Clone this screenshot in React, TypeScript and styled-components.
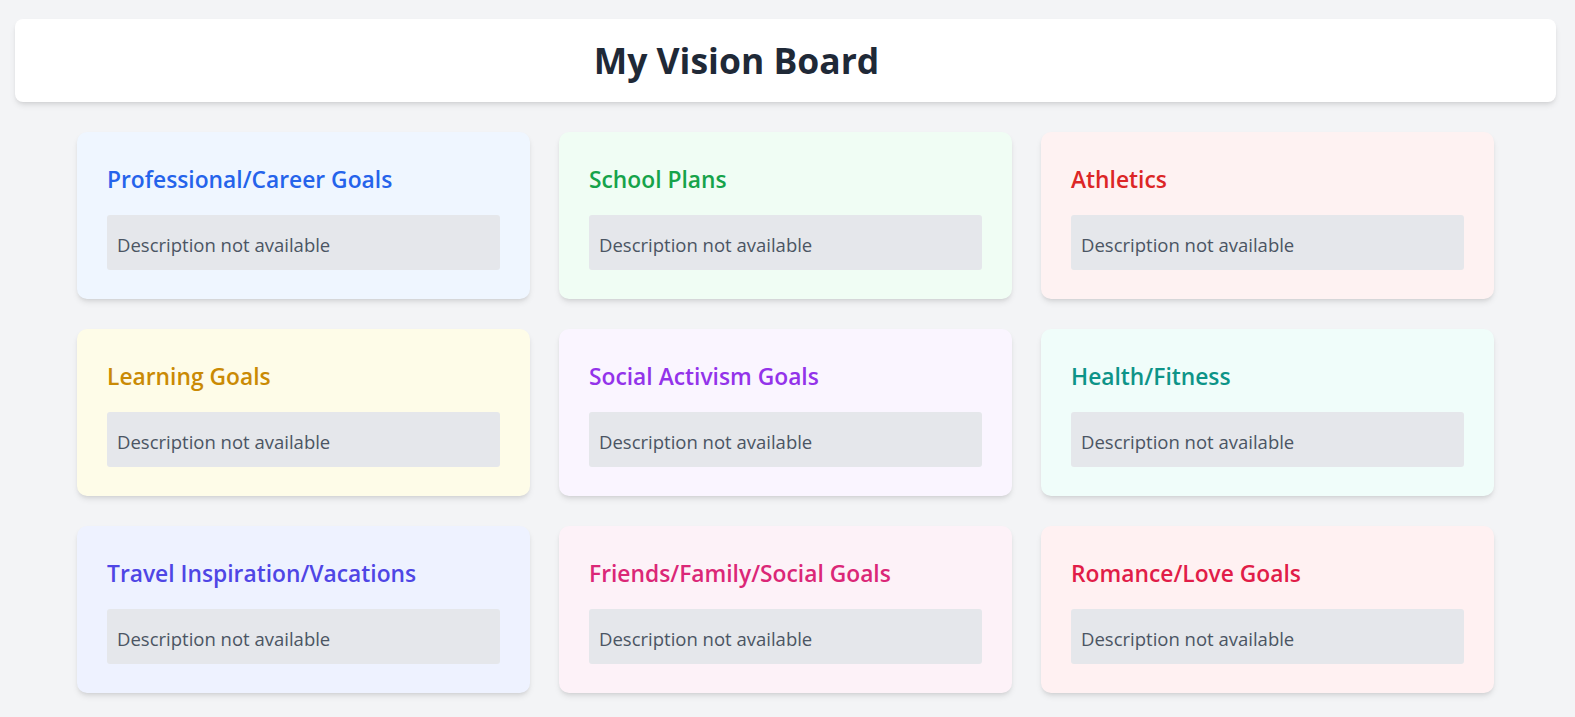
import React from "react";
import styled, { createGlobalStyle } from "styled-components";

const GlobalStyle = createGlobalStyle`
  html, body {
    margin: 0;
    padding: 0;
    background: #f3f4f6;
    font-family: "Open Sans", "Noto Sans", Arial, sans-serif;
  }
`;

const Page = styled.div`
  padding-top: 19px;
  padding-bottom: 24px;
`;

const Header = styled.header`
  margin: 0 19px 0 15px;
  height: 83px;
  background: #ffffff;
  border-radius: 8px;
  box-shadow: 0 4px 6px -1px rgba(0, 0, 0, 0.1), 0 2px 4px -2px rgba(0, 0, 0, 0.1);
  display: flex;
  align-items: center;
  justify-content: center;
  padding-right: 98px;
`;

const Title = styled.h1`
  margin: 0;
  font-size: 35.5px;
  font-weight: 700;
  color: #1f2937;
  line-height: 45px;
`;

const Grid = styled.main`
  margin: 30px 0 0 77px;
  width: 1417px;
  display: grid;
  grid-template-columns: repeat(3, 453px);
  column-gap: 29px;
  row-gap: 30px;
`;

const Card = styled.section<{ $bg: string }>`
  background: ${(p) => p.$bg};
  border-radius: 10px;
  padding: 30px;
  height: 167px;
  box-sizing: border-box;
  box-shadow: 0 4px 6px -1px rgba(0, 0, 0, 0.1), 0 2px 4px -2px rgba(0, 0, 0, 0.1);
`;

const CardTitle = styled.h2<{ $color: string }>`
  margin: 0 0 18px;
  font-size: 22.8px;
  font-weight: 600;
  line-height: 35px;
  color: ${(p) => p.$color};
`;

const Description = styled.p`
  margin: 0;
  background: #e5e7eb;
  border-radius: 3px;
  padding: 12px 10px 8px;
  font-size: 18.5px;
  line-height: 35px;
  color: #4b5563;
`;

const goals = [
  { title: "Professional/Career Goals", color: "#2563eb", bg: "#eff6ff" },
  { title: "School Plans", color: "#16a34a", bg: "#f0fdf4" },
  { title: "Athletics", color: "#dc2626", bg: "#fef2f2" },
  { title: "Learning Goals", color: "#ca8a04", bg: "#fefce8" },
  { title: "Social Activism Goals", color: "#9333ea", bg: "#faf5ff" },
  { title: "Health/Fitness", color: "#0d9488", bg: "#f0fdfa" },
  { title: "Travel Inspiration/Vacations", color: "#4f46e5", bg: "#eef2ff" },
  { title: "Friends/Family/Social Goals", color: "#db2777", bg: "#fdf2f8" },
  { title: "Romance/Love Goals", color: "#e11d48", bg: "#fff1f2" },
];

export default function App() {
  return (
    <>
      <GlobalStyle />
      <Page>
        <Header>
          <Title>My Vision Board</Title>
        </Header>
        <Grid>
          {goals.map((g) => (
            <Card key={g.title} $bg={g.bg}>
              <CardTitle $color={g.color}>{g.title}</CardTitle>
              <Description>Description not available</Description>
            </Card>
          ))}
        </Grid>
      </Page>
    </>
  );
}
